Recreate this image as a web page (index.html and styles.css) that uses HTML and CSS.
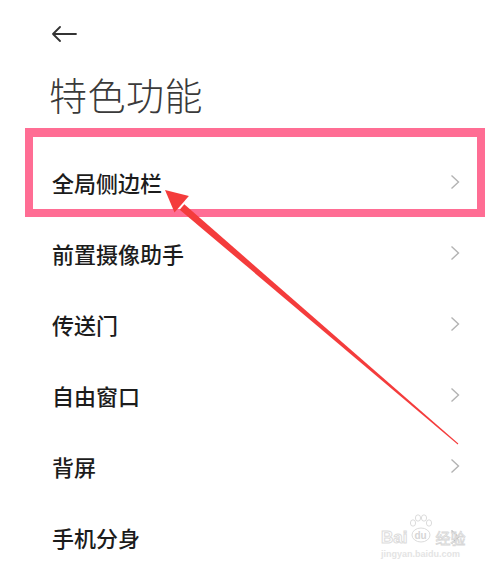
FILE: index.html
```html
<!DOCTYPE html>
<html lang="zh-CN">
<head>
<meta charset="utf-8">
<title>特色功能</title>
<link rel="stylesheet" href="styles.css">
</head>
<body>
<div class="page">
  <header class="topbar">
    <svg class="back" width="26" height="16" viewBox="0 0 26 16">
      <path d="M25 8H2M9 1L2 8l7 7" fill="none" stroke="#333" stroke-width="1.8" stroke-linecap="round" stroke-linejoin="round"/>
    </svg>
  </header>
  <h1 class="title">特色功能</h1>
  <ul class="list">
    <li class="item"><span class="label">全局侧边栏</span><svg class="chev" width="10" height="16" viewBox="0 0 10 16"><path d="M1.5 1.5L8.5 8l-7 6.5" fill="none" stroke="#b3b3b3" stroke-width="1.4"/></svg></li>
    <li class="item"><span class="label">前置摄像助手</span><svg class="chev" width="10" height="16" viewBox="0 0 10 16"><path d="M1.5 1.5L8.5 8l-7 6.5" fill="none" stroke="#b3b3b3" stroke-width="1.4"/></svg></li>
    <li class="item"><span class="label">传送门</span><svg class="chev" width="10" height="16" viewBox="0 0 10 16"><path d="M1.5 1.5L8.5 8l-7 6.5" fill="none" stroke="#b3b3b3" stroke-width="1.4"/></svg></li>
    <li class="item"><span class="label">自由窗口</span><svg class="chev" width="10" height="16" viewBox="0 0 10 16"><path d="M1.5 1.5L8.5 8l-7 6.5" fill="none" stroke="#b3b3b3" stroke-width="1.4"/></svg></li>
    <li class="item"><span class="label">背屏</span><svg class="chev" width="10" height="16" viewBox="0 0 10 16"><path d="M1.5 1.5L8.5 8l-7 6.5" fill="none" stroke="#b3b3b3" stroke-width="1.4"/></svg></li>
    <li class="item"><span class="label">手机分身</span><svg class="chev" width="10" height="16" viewBox="0 0 10 16"><path d="M1.5 1.5L8.5 8l-7 6.5" fill="none" stroke="#b3b3b3" stroke-width="1.4"/></svg></li>
  </ul>

  <div class="highlight"></div>
  <svg class="annot-arrow" width="498" height="571" viewBox="0 0 498 571">
    <polygon points="179.7,209.7 184.3,204.3 458.3,443.6 457.7,444.4" fill="#f43c3c"/>
    <polygon points="165,190 188.9,196 174.5,212.6" fill="#f43c3c"/>
  </svg>

  <div class="watermark">
    <div class="wm-row">
      <span class="wm-bai">Bai</span>
      <span class="wm-paw">
        <svg width="26" height="30" viewBox="0 0 26 30">
          <g fill="none" stroke="#dcdcdc" stroke-width="1">
            <ellipse cx="5" cy="9" rx="2.6" ry="3.2"/>
            <ellipse cx="10" cy="4" rx="2.6" ry="3.2"/>
            <ellipse cx="16" cy="4" rx="2.6" ry="3.2"/>
            <ellipse cx="21" cy="9" rx="2.6" ry="3.2"/>
            <ellipse cx="13" cy="21" rx="9" ry="7"/>
          </g>
        </svg>
        <span class="wm-du">du</span>
      </span>
      <span class="wm-jy">经验</span>
    </div>
    <div class="wm-url">jingyan.baidu.com</div>
  </div>
</div>
</body>
</html>
```
FILE: styles.css
```css
html, body {
  margin: 0;
  padding: 0;
  background: #ffffff;
}
body {
  font-family: "Noto Sans CJK SC", "Noto Sans", sans-serif;
}
.page {
  position: relative;
  width: 498px;
  height: 571px;
  overflow: hidden;
  background: #fff;
}
.topbar {
  height: 68px;
  display: flex;
  align-items: center;
  padding-left: 51px;
}
.back {
  display: block;
  margin-top: -1px;
}
.title {
  margin: 4px 0 30px 0;
  padding-left: 49px;
  font-size: 38px;
  line-height: 44px;
  font-weight: 300;
  color: #3a3a3a;
  letter-spacing: 0.5px;
}
.list {
  list-style: none;
  margin: 0;
  padding: 0;
}
.item {
  height: 71px;
  display: flex;
  align-items: center;
  justify-content: space-between;
  padding: 0 38px 0 52px;
}
.label {
  font-size: 22px;
  line-height: 30px;
  font-weight: 500;
  color: #1c1c1c;
}
.chev {
  display: block;
}
.highlight {
  position: absolute;
  left: 25px;
  top: 128px;
  width: 444px;
  height: 72px;
  border: 8px solid #ff6d94;
  border-top-width: 9px;
}
.annot-arrow {
  position: absolute;
  left: 0;
  top: 0;
  pointer-events: none;
}
.watermark {
  position: absolute;
  left: 381px;
  top: 508px;
  width: 92px;
  color: #e2e2e2;
  font-family: "Liberation Sans", sans-serif;
}
.wm-row {
  display: flex;
  align-items: flex-end;
  height: 38px;
}
.wm-bai {
  font-size: 17px;
  line-height: 17px;
  font-weight: 700;
  color: #fff;
  -webkit-text-stroke: 1px #dcdcdc;
}
.wm-paw {
  position: relative;
  width: 28px;
  height: 38px;
  display: flex;
  justify-content: center;
}
.wm-paw svg {
  position: absolute;
  left: 1px;
  top: 6px;
}
.wm-du {
  position: absolute;
  left: 7px;
  top: 23px;
  font-size: 10px;
  line-height: 10px;
  font-weight: 700;
  color: #d6d6d6;
}
.wm-jy {
  font-family: "Noto Sans CJK SC", sans-serif;
  font-size: 15px;
  line-height: 17px;
  color: #fff;
  -webkit-text-stroke: 0.8px #d8d8d8;
}
.wm-url {
  margin-top: 3px;
  font-size: 9px;
  line-height: 10px;
  font-weight: 700;
  color: #e4e4e4;
}
```
